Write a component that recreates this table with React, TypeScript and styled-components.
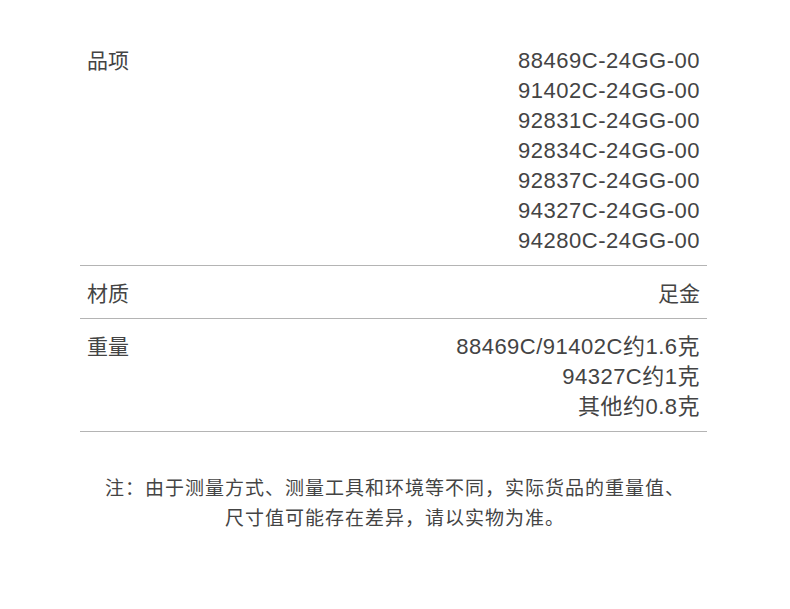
import React from "react";
import styled, { createGlobalStyle } from "styled-components";

const GlobalStyle = createGlobalStyle`
  html, body {
    margin: 0;
    padding: 0;
    background: #ffffff;
  }
  body {
    font-family: "Liberation Sans", "Noto Sans CJK SC", sans-serif;
    color: #444444;
  }
`;

const Page = styled.div`
  width: 790px;
  height: 609px;
  padding-top: 33px;
  box-sizing: border-box;
`;

const Table = styled.div`
  margin-left: 80px;
  width: 627px;
`;

const Row = styled.div`
  display: flex;
  justify-content: space-between;
  align-items: flex-start;
  padding: 13px 7px 9px;
  border-bottom: 1px solid #b4b4b4;
`;

const Label = styled.div`
  font-size: 21px;
  line-height: 30px;
  color: #444;
`;

const Values = styled.div`
  display: flex;
  flex-direction: column;
  align-items: flex-end;
`;

const Value = styled.div<{ $spaced?: boolean }>`
  font-size: ${(p) => (p.$spaced ? "22px" : "21px")};
  letter-spacing: ${(p) => (p.$spaced ? "0.5px" : "0")};
  line-height: 30px;
  color: #444;
  white-space: nowrap;
`;

const Note = styled.div`
  margin-top: 42px;
  text-align: center;
  font-size: 19px;
  letter-spacing: 1px;
  line-height: 30px;
  color: #444;
`;

const codes = [
  "88469C-24GG-00",
  "91402C-24GG-00",
  "92831C-24GG-00",
  "92834C-24GG-00",
  "92837C-24GG-00",
  "94327C-24GG-00",
  "94280C-24GG-00",
];

const weights = ["88469C/91402C约1.6克", "94327C约1克", "其他约0.8克"];

export default function App() {
  return (
    <Page>
      <GlobalStyle />
      <Table>
        <Row>
          <Label>品项</Label>
          <Values>
            {codes.map((c) => (
              <Value key={c} $spaced>
                {c}
              </Value>
            ))}
          </Values>
        </Row>
        <Row>
          <Label>材质</Label>
          <Values>
            <Value>足金</Value>
          </Values>
        </Row>
        <Row>
          <Label>重量</Label>
          <Values>
            {weights.map((w) => (
              <Value key={w} $spaced>
                {w}
              </Value>
            ))}
          </Values>
        </Row>
      </Table>
      <Note>
        <div>注：由于测量方式、测量工具和环境等不同，实际货品的重量值、</div>
        <div>尺寸值可能存在差异，请以实物为准。</div>
      </Note>
    </Page>
  );
}
